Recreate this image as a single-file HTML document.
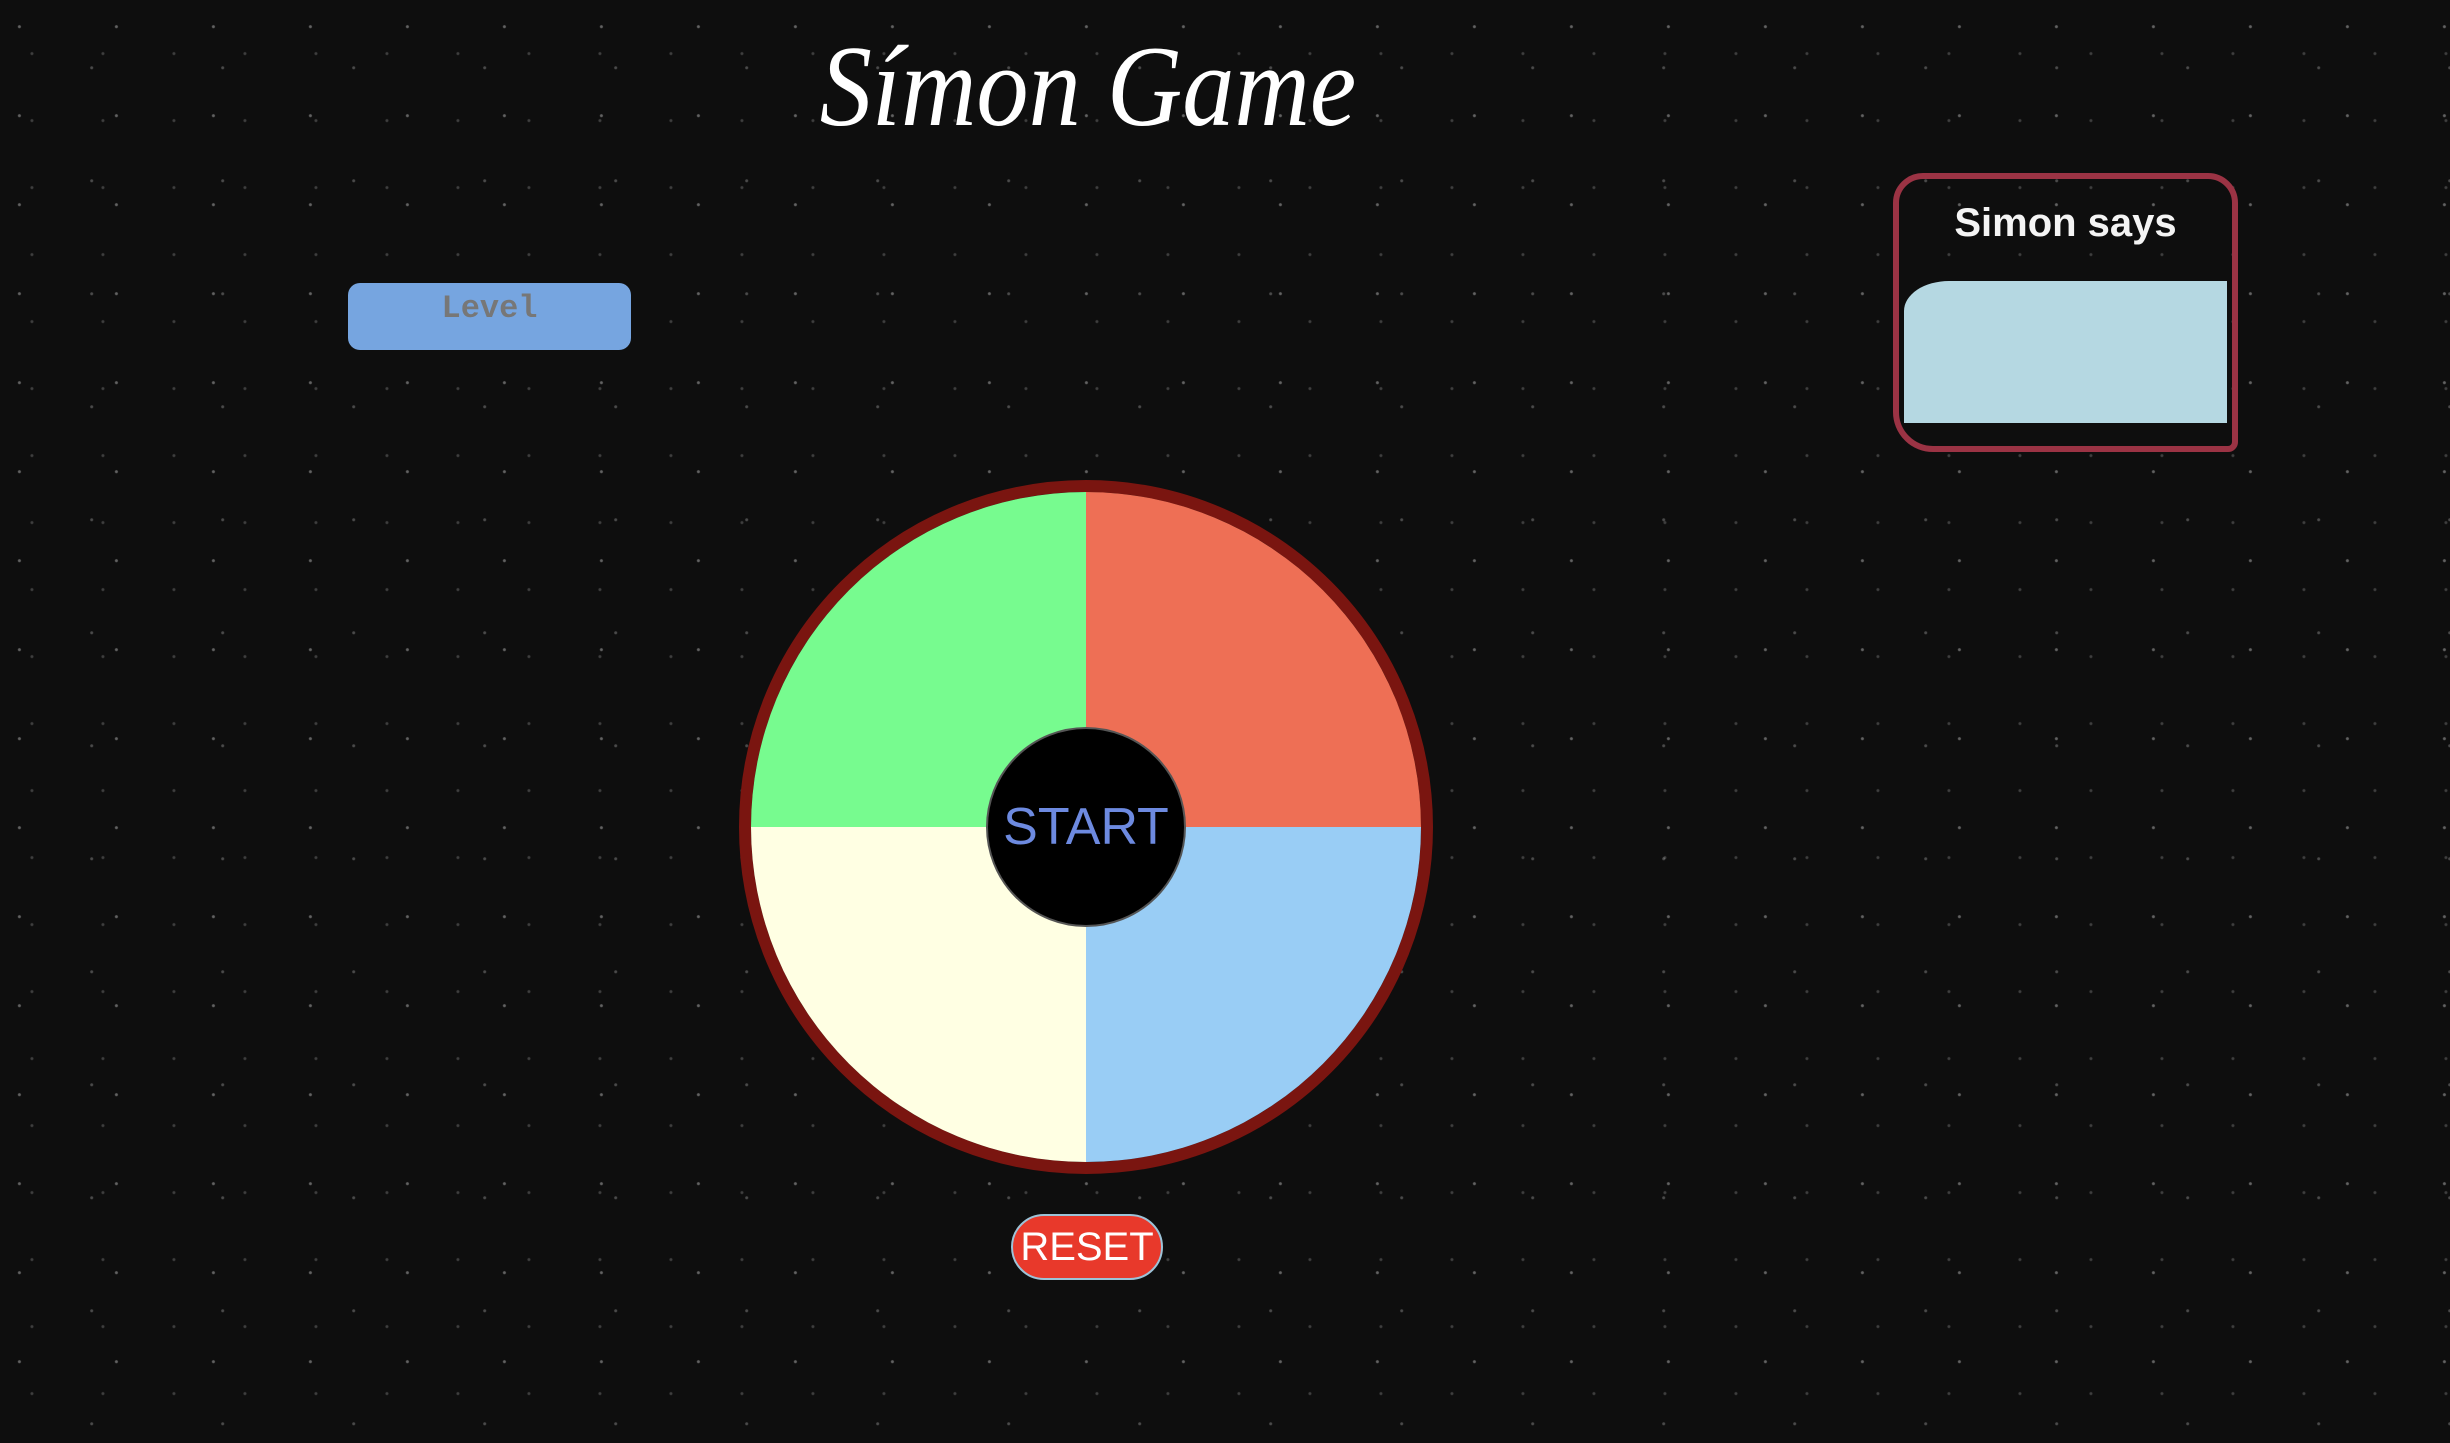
<!DOCTYPE html>
<html><head><meta charset="utf-8"><style>
html,body{margin:0;padding:0;}
body{width:2450px;height:1443px;position:relative;overflow:hidden;background:#0e0e0e;
background-image:
radial-gradient(circle at 20% 30%, rgba(255,255,255,.35) 0 1px, transparent 2px),
radial-gradient(circle at 70% 60%, rgba(255,255,255,.25) 0 1px, transparent 2px),
radial-gradient(circle at 45% 80%, rgba(255,255,255,.2) 0 1px, transparent 2px);
background-size:97px 89px,131px 113px,71px 67px;
font-family:"Liberation Sans",sans-serif;}
.title{position:absolute;left:0;width:2176px;top:22px;text-align:center;color:#fff;font-family:"Liberation Serif",serif;font-style:italic;font-size:116px;line-height:130px;transform:scaleX(0.9);}
.level{position:absolute;left:348px;top:283px;width:283px;height:67px;background:#76a5e0;border-radius:12px;text-align:center;font-family:"Liberation Mono","Courier New",monospace;font-weight:bold;color:#777;font-size:32px;line-height:52px;}
.says{position:absolute;left:1893px;top:173px;width:333px;height:267px;border:6px solid #9b3344;border-radius:30px 30px 10px 40px;}
.says h2{margin:0;position:absolute;top:22px;width:100%;text-align:center;color:#f4f4f4;font-size:40px;font-weight:bold;font-family:"Liberation Sans",sans-serif;}
.says .ta{position:absolute;left:5px;top:102px;width:323px;height:142px;background:#b5d8e2;border-top-left-radius:45px 30px;}
.wheel{position:absolute;left:739px;top:480px;width:670px;height:670px;border:12px solid #7a1510;border-radius:50%;overflow:hidden;}
.q{position:absolute;width:335px;height:335px;}
.start{position:absolute;left:986px;top:727px;width:196px;height:196px;border-radius:50%;background:#000;border:2px solid #555;color:#6d8ae0;font-size:52px;text-align:center;line-height:196px;}
.reset{position:absolute;left:1011px;top:1214px;width:148px;height:62px;background:#e8392b;border:2px solid #9cc3d8;border-radius:33px;color:#fff;font-size:40px;text-align:center;line-height:62px;}
</style></head><body>
<div class="title">Símon Game</div>
<div class="level">Level</div>
<div class="says"><h2>Simon says</h2><div class="ta"></div></div>
<div class="wheel">
<div class="q" style="left:0;top:0;background:#77fb8f"></div>
<div class="q" style="left:335px;top:0;background:#ee6f55"></div>
<div class="q" style="left:0;top:335px;background:#ffffe3"></div>
<div class="q" style="left:335px;top:335px;background:#99cdf5"></div>
</div>
<div class="start">START</div>
<div class="reset">RESET</div>
</body></html>
